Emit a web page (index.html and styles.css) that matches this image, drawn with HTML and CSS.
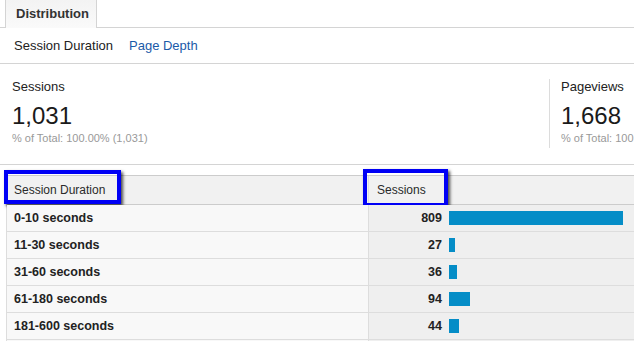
FILE: index.html
```html
<!DOCTYPE html>
<html>
<head>
<meta charset="utf-8">
<link rel="stylesheet" href="styles.css">
</head>
<body>
<div class="tabs">
  <div class="tab">Distribution</div>
</div>
<div class="subnav">
  <span class="sub active">Session Duration</span>
  <span class="sub link">Page Depth</span>
</div>
<div class="cards">
  <div class="card">
    <div class="card-label">Sessions</div>
    <div class="card-value">1,031</div>
    <div class="card-pct">% of Total: 100.00% (1,031)</div>
  </div>
  <div class="card card-second">
    <div class="card-label">Pageviews</div>
    <div class="card-value">1,668</div>
    <div class="card-pct">% of Total: 100.00% (1,668)</div>
  </div>
</div>
<div class="table">
  <div class="row head">
    <div class="c1"><span>Session Duration</span><div class="mark mark1"></div></div>
    <div class="c2"><span class="head-sessions">Sessions</span><div class="mark mark2"></div></div>
  </div>
  <div class="row">
    <div class="c1 label">0-10 seconds</div>
    <div class="c2"><span class="num">809</span><span class="bar" style="width:174px"></span></div>
  </div>
  <div class="row">
    <div class="c1 label">11-30 seconds</div>
    <div class="c2"><span class="num">27</span><span class="bar" style="width:6px"></span></div>
  </div>
  <div class="row">
    <div class="c1 label">31-60 seconds</div>
    <div class="c2"><span class="num">36</span><span class="bar" style="width:8px"></span></div>
  </div>
  <div class="row">
    <div class="c1 label">61-180 seconds</div>
    <div class="c2"><span class="num">94</span><span class="bar" style="width:21px"></span></div>
  </div>
  <div class="row">
    <div class="c1 label">181-600 seconds</div>
    <div class="c2"><span class="num">44</span><span class="bar" style="width:10px"></span></div>
  </div>
  <div class="row row-stub">
    <div class="c1"></div>
    <div class="c2"></div>
  </div>
</div>
</body>
</html>
```
FILE: styles.css
```css
html, body {
  margin: 0;
  padding: 0;
  background: #fff;
  overflow: hidden;
}
body {
  font-family: "Liberation Sans", Arial, sans-serif;
  color: #333;
  width: 634px;
  height: 341px;
}
.tabs {
  height: 27px;
  border-bottom: 1px solid #d4d4d4;
  display: flex;
}
.tab {
  margin-left: 5px;
  width: 80px;
  height: 28px;
  padding-left: 10px;
  border-left: 1px solid #d4d4d4;
  border-right: 1px solid #d4d4d4;
  background: linear-gradient(#f3f3f3, #fafafa);
  font-size: 13px;
  font-weight: bold;
  color: #333;
  line-height: 27px;
  white-space: nowrap;
}
.subnav {
  height: 35px;
  border-bottom: 1px solid #d4d4d4;
  display: flex;
  gap: 16px;
  padding-left: 14px;
  font-size: 13px;
  line-height: 35px;
}
.sub.active { color: #222; }
.sub.link { color: #1a5aa8; }
.cards {
  height: 100px;
  border-bottom: 1px solid #d4d4d4;
  display: flex;
  overflow: hidden;
}
.card {
  width: 537px;
  padding-left: 12px;
  padding-top: 15px;
  flex: none;
}
.card-second {
  width: 200px;
  margin-top: 15px;
  padding-top: 0;
  padding-left: 11px;
  height: 69px;
  border-left: 1px solid #dcdcdc;
  white-space: nowrap;
}
.card-label {
  font-size: 13px;
  line-height: 15px;
  color: #222;
}
.card-value {
  margin-top: 8px;
  font-size: 24px;
  line-height: 28px;
  color: #1a1a1a;
}
.card-pct {
  margin-top: 2px;
  font-size: 11px;
  line-height: 13px;
  color: #999;
}
.table {
  margin-top: 10px;
  margin-left: 6px;
  border-top: 1px solid #ccc;
}
.row {
  display: grid;
  grid-template-columns: 362px 1fr;
  height: 26px;
  border-bottom: 1px solid #ddd;
  border-left: 1px solid #ddd;
}
.row.head {
  height: 28px;
  background: #f1f1f1;
  border-bottom-color: #ccc;
}
.c1 {
  position: relative;
  padding-left: 7px;
  border-right: 1px solid #ddd;
  background: #f8f8f8;
  font-size: 12.5px;
  line-height: 26px;
}
.c2 {
  position: relative;
  display: flex;
  align-items: center;
  background: #efefef;
}
.head .c1, .head .c2 {
  background: #f1f1f1;
  line-height: 28px;
  font-size: 12px;
  color: #2a2a2a;
}
.head-sessions {
  padding-left: 8px;
}
.label {
  font-weight: bold;
  color: #222;
}
.num {
  width: 73px;
  text-align: right;
  font-size: 12.5px;
  font-weight: bold;
  color: #222;
}
.bar {
  margin-left: 7px;
  height: 14px;
  background: #058dc7;
}
.mark {
  position: absolute;
  border: 4px solid #0000f5;
  box-shadow: 2px 2px 3px rgba(0, 0, 0, 0.7);
  box-sizing: border-box;
}
.mark1 {
  left: -3px;
  top: -6px;
  width: 117px;
  height: 34px;
}
.mark2 {
  left: -6px;
  top: -7px;
  width: 85px;
  height: 38px;
}
```
